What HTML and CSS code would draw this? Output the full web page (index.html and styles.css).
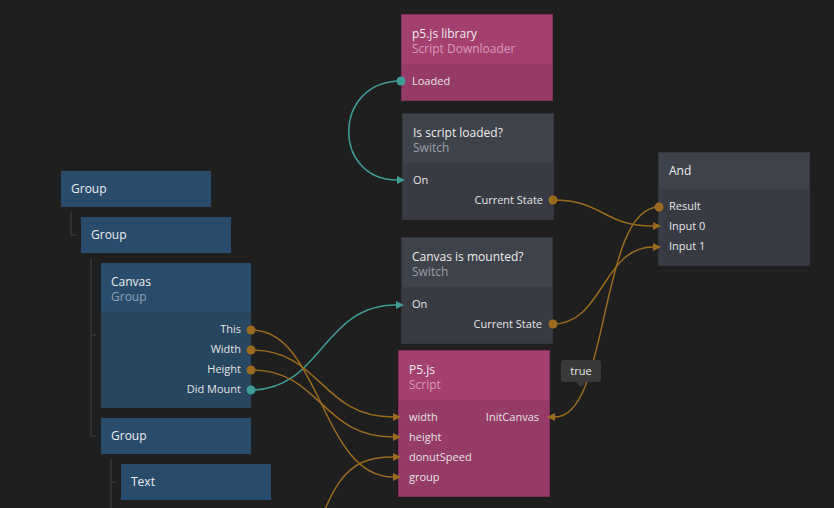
FILE: index.html
```html
<!DOCTYPE html>
<html>
<head>
<meta charset="utf-8">
<link rel="stylesheet" href="styles.css">
</head>
<body>
<div class="canvas">
  <svg class="layer" width="834" height="508" viewBox="0 0 834 508">
    <g class="tree-lines">
      <path d="M71 212 V235 H76"/>
      <path d="M91 258 V436 H96 M91 335 H96"/>
      <path d="M111 459 V508 M111 482 H116"/>
    </g>
  </svg>

  <div class="tree">
    <div class="node blue"><div class="head single"><span class="title">Group</span></div></div>
    <div class="node blue lvl1"><div class="head single"><span class="title">Group</span></div></div>
    <div class="node blue lvl2">
      <div class="head"><div class="title">Canvas</div><div class="sub">Group</div></div>
      <div class="body">
        <div class="port out">This</div>
        <div class="port out">Width</div>
        <div class="port out">Height</div>
        <div class="port out">Did Mount</div>
      </div>
    </div>
    <div class="node blue lvl2"><div class="head single"><span class="title">Group</span></div></div>
    <div class="node blue lvl3"><div class="head single"><span class="title">Text</span></div></div>
  </div>

  <div class="node pink abs n-lib">
    <div class="head"><div class="title">p5.js library</div><div class="sub">Script Downloader</div></div>
    <div class="body"><div class="port">Loaded</div></div>
  </div>

  <div class="node gray abs n-loaded">
    <div class="head"><div class="title">Is script loaded?</div><div class="sub">Switch</div></div>
    <div class="body">
      <div class="port">On</div>
      <div class="port out">Current State</div>
    </div>
  </div>

  <div class="node gray abs n-mounted">
    <div class="head"><div class="title">Canvas is mounted?</div><div class="sub">Switch</div></div>
    <div class="body">
      <div class="port">On</div>
      <div class="port out">Current State</div>
    </div>
  </div>

  <div class="node pink abs n-p5">
    <div class="head"><div class="title">P5.js</div><div class="sub">Script</div></div>
    <div class="body">
      <div class="port split"><span>width</span><span>InitCanvas</span></div>
      <div class="port">height</div>
      <div class="port">donutSpeed</div>
      <div class="port">group</div>
    </div>
  </div>

  <div class="node gray abs n-and">
    <div class="head single"><span class="title">And</span></div>
    <div class="body">
      <div class="port">Result</div>
      <div class="port">Input 0</div>
      <div class="port">Input 1</div>
    </div>
  </div>

  <svg class="layer" width="834" height="508" viewBox="0 0 834 508">
    <g class="wire teal">
      <path d="M401 81 C332 81 332 180 397 180"/>
      <path d="M251 390 C322 390 322 305 396 305"/>
    </g>
    <g class="wire orange">
      <path d="M553 200 C603 200 603 226 653 226"/>
      <path d="M553 324 C603 324 603 247 653 247"/>
      <path d="M659 207 C599 207 610 417 555 417"/>
      <path d="M251 330 C321 330 321 477 393 477"/>
      <path d="M251 350 C321 350 321 417 393 417"/>
      <path d="M251 370 C321 370 321 437 393 437"/>
      <path d="M300 585 C330 480 345 457 393 457"/>
    </g>
    <g class="arrow teal-fill">
      <path d="M397 176 L405 180 L397 184 Z"/>
      <path d="M396 301 L404 305 L396 309 Z"/>
    </g>
    <g class="arrow orange-fill">
      <path d="M653 222 L661 226 L653 230 Z"/>
      <path d="M653 243 L661 247 L653 251 Z"/>
      <path d="M555 413 L547 417 L555 421 Z"/>
      <path d="M393 413 L401 417 L393 421 Z"/>
      <path d="M393 433 L401 437 L393 441 Z"/>
      <path d="M393 453 L401 457 L393 461 Z"/>
      <path d="M393 473 L401 477 L393 481 Z"/>
    </g>
    <g class="teal-fill">
      <circle cx="401" cy="81" r="4.5"/>
      <circle cx="251" cy="390" r="4.5"/>
    </g>
    <g class="orange-fill">
      <circle cx="553" cy="200" r="4.5"/>
      <circle cx="553" cy="324" r="4.5"/>
      <circle cx="659" cy="207" r="4.5"/>
      <circle cx="251" cy="330" r="4.5"/>
      <circle cx="251" cy="350" r="4.5"/>
      <circle cx="251" cy="370" r="4.5"/>
    </g>
  </svg>

  <div class="badge">true</div>
</div>
</body>
</html>
```
FILE: styles.css
```css
html, body {
  margin: 0;
  padding: 0;
  background: #1f1f1f;
}

body {
  font-family: "Open Sans", "Noto Sans", sans-serif;
  color: #e6e6e6;
}

.canvas {
  position: relative;
  width: 834px;
  height: 508px;
  overflow: hidden;
  background: #1f1f1f;
}

.layer {
  position: absolute;
  left: 0;
  top: 0;
}

.tree-lines path {
  fill: none;
  stroke: #383838;
  stroke-width: 1.5;
}

.tree {
  position: absolute;
  left: 61px;
  top: 171px;
  display: flex;
  flex-direction: column;
  align-items: flex-start;
  gap: 10px;
}

.lvl1 { margin-left: 20px; }
.lvl2 { margin-left: 40px; }
.lvl3 { margin-left: 60px; }

.node {
  width: 150px;
}

.abs {
  position: absolute;
}

.n-lib { left: 402px; top: 15px; }
.n-loaded { left: 403px; top: 114px; }
.n-mounted { left: 402px; top: 238px; }
.n-p5 { left: 399px; top: 351px; }
.n-and { left: 659px; top: 153px; }

.head {
  height: 49px;
  box-sizing: border-box;
  padding: 11px 10px 0;
  line-height: 15px;
}

.head.single {
  height: 36px;
  padding: 0 10px 1px;
  display: flex;
  align-items: center;
}

.title {
  font-size: 12px;
  color: #ededed;
}

.sub {
  font-size: 12px;
}

.body {
  padding: 6px 0 10px;
}

.port {
  height: 20px;
  display: flex;
  align-items: center;
  padding: 0 10px;
  font-size: 11px;
  color: #e4e4e4;
}

.port.out {
  justify-content: flex-end;
}

.port.split {
  justify-content: space-between;
}

/* colour themes */
.blue .head { background: #2a4c6c; }
.blue .body { background: #27465f; }
.blue .sub { color: #8aa1b6; }

.pink { box-shadow: 0 0 0 1px #80305a; }
.pink .head { background: #a44070; }
.pink .body { background: #963a67; }
.pink .sub { color: #d898b8; }

.gray { box-shadow: 0 0 0 1px #33363d; }
.gray .head { background: #3e424b; }
.gray .body { background: #383b44; }
.gray .sub { color: #9a9ea7; }

.wire path {
  fill: none;
  stroke-width: 1.5;
}

.wire.teal path { stroke: #3f9c95; }
.wire.orange path { stroke: #9a6b1e; }

.teal-fill { fill: #3f9c95; }
.orange-fill { fill: #9a6b1e; }

.badge {
  position: absolute;
  left: 561px;
  top: 360px;
  width: 40px;
  height: 22px;
  box-sizing: border-box;
  background: #393939;
  border-radius: 3px;
  color: #e8e8e8;
  font-size: 11px;
  line-height: 21px;
  text-align: center;
}

.badge::after {
  content: "";
  position: absolute;
  left: 15px;
  top: 22px;
  border-left: 5px solid transparent;
  border-right: 5px solid transparent;
  border-top: 5px solid #393939;
}
```
